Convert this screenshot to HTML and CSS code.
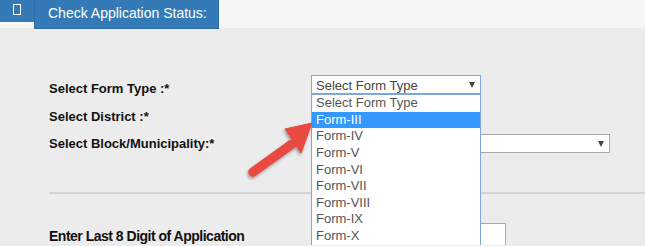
FILE: index.html
```html
<!DOCTYPE html>
<html lang="en">
<head>
  <meta charset="UTF-8" />
  <title>Check Application Status</title>
  <link rel="stylesheet" href="styles.css">
</head>
<body>

  <div class="topbar">
    <div class="menu-btn"><span class="glyph"></span></div>
    <div class="tab">Check Application Status:</div>
  </div>

  <div class="panel">
    <div class="form-row">
      <label>Select Form Type :*</label>
      <div class="select focused">Select Form Type <span class="caret"></span></div>
    </div>
    <div class="form-row">
      <label>Select District :*</label>
    </div>
    <div class="form-row">
      <label>Select Block/Municipality:*</label>
      <div class="select wide"><span class="caret"></span></div>
    </div>

    <hr class="divider">

    <div class="form-row app-row">
      <label class="narrow">Enter Last 8 Digit of Application</label>
      <div class="text-input"></div>
    </div>

    <ul class="dropdown">
      <li>Select Form Type</li>
      <li class="active">Form-III</li>
      <li>Form-IV</li>
      <li>Form-V</li>
      <li>Form-VI</li>
      <li>Form-VII</li>
      <li>Form-VIII</li>
      <li>Form-IX</li>
      <li>Form-X</li>
    </ul>

    <svg class="pointer" width="90" height="80" viewBox="0 0 90 80">
      <defs>
        <filter id="shade" x="-20%" y="-20%" width="140%" height="140%">
          <feDropShadow dx="-1" dy="2" stdDeviation="1.5" flood-color="#000" flood-opacity="0.35"/>
        </filter>
      </defs>
      <g filter="url(#shade)" fill="#e8483f" stroke="#e8483f">
        <line x1="13" y1="62" x2="52" y2="34" stroke-width="9.5" stroke-linecap="round"/>
        <polygon points="72,13 45,19 61,43" stroke-width="1" stroke-linejoin="round"/>
      </g>
    </svg>
  </div>

</body>
</html>
```

FILE: styles.css
```css
body {
  margin: 0;
  background: #ececec;
  font-family: 'Liberation Sans', Arial, sans-serif;
  color: #222;
  overflow: hidden;
}

.topbar {
  display: flex;
  align-items: flex-start;
  height: 28px;
  background: #f7f7f7;
}

.menu-btn {
  width: 34px;
  height: 22px;
  background: #337ab7;
  display: flex;
  justify-content: center;
  padding-top: 4px;
  box-sizing: border-box;
}

.glyph {
  width: 6px;
  height: 9px;
  border: 1px solid #fff;
}

.tab {
  width: 185px;
  height: 29px;
  box-sizing: border-box;
  background: #337ab7;
  border: 1px solid #2e6da4;
  border-top: none;
  color: #fff;
  font-size: 14px;
  padding: 5px 0 0 13px;
}

.panel {
  position: relative;
  padding: 45px 0 0 49px;
}

.form-row {
  display: flex;
  align-items: center;
  height: 28px;
}

.form-row label {
  width: 262px;
  font-size: 13px;
  font-weight: bold;
  color: #111;
  padding-top: 3px;
}

.form-row:nth-child(3) label {
  padding-top: 1px;
}

.select {
  position: relative;
  width: 170px;
  height: 19px;
  box-sizing: border-box;
  background: #fff;
  border: 1px solid #aaa;
  font-size: 13px;
  color: #444;
  padding: 2px 0 0 4px;
}

.select.focused {
  border-color: #7ea6e0;
  align-self: flex-start;
  margin-top: 2px;
}

.select.wide {
  width: 299px;
}

.caret {
  position: absolute;
  right: 5px;
  top: 6px;
  border-left: 3.5px solid transparent;
  border-right: 3.5px solid transparent;
  border-top: 6px solid #444;
}

.divider {
  border: none;
  border-top: 2px solid #d4d4d4;
  margin: 35px 0 0 0;
  height: 0;
}

.app-row {
  align-items: flex-start;
  margin-top: 29px;
  height: 22px;
}

.app-row label.narrow {
  font-size: 14px;
  letter-spacing: -0.5px;
  padding-top: 5px;
}

.text-input {
  width: 195px;
  height: 22px;
  box-sizing: border-box;
  background: #fff;
  border: 1px solid #aaa;
  border-bottom: none;
}

.dropdown {
  position: absolute;
  left: 311px;
  top: 66px;
  width: 170px;
  height: 152px;
  box-sizing: border-box;
  margin: 0;
  padding: 0;
  list-style: none;
  background: #fff;
  border: 1px solid #7ea6e0;
  border-bottom: none;
  overflow: hidden;
}

.dropdown li {
  height: 16.65px;
  line-height: 16.65px;
  font-size: 13px;
  color: #555;
  padding-left: 4px;
}

.dropdown li.active {
  background: #3399ff;
  color: #fff;
}

.pointer {
  position: absolute;
  left: 240px;
  top: 82px;
}
```
